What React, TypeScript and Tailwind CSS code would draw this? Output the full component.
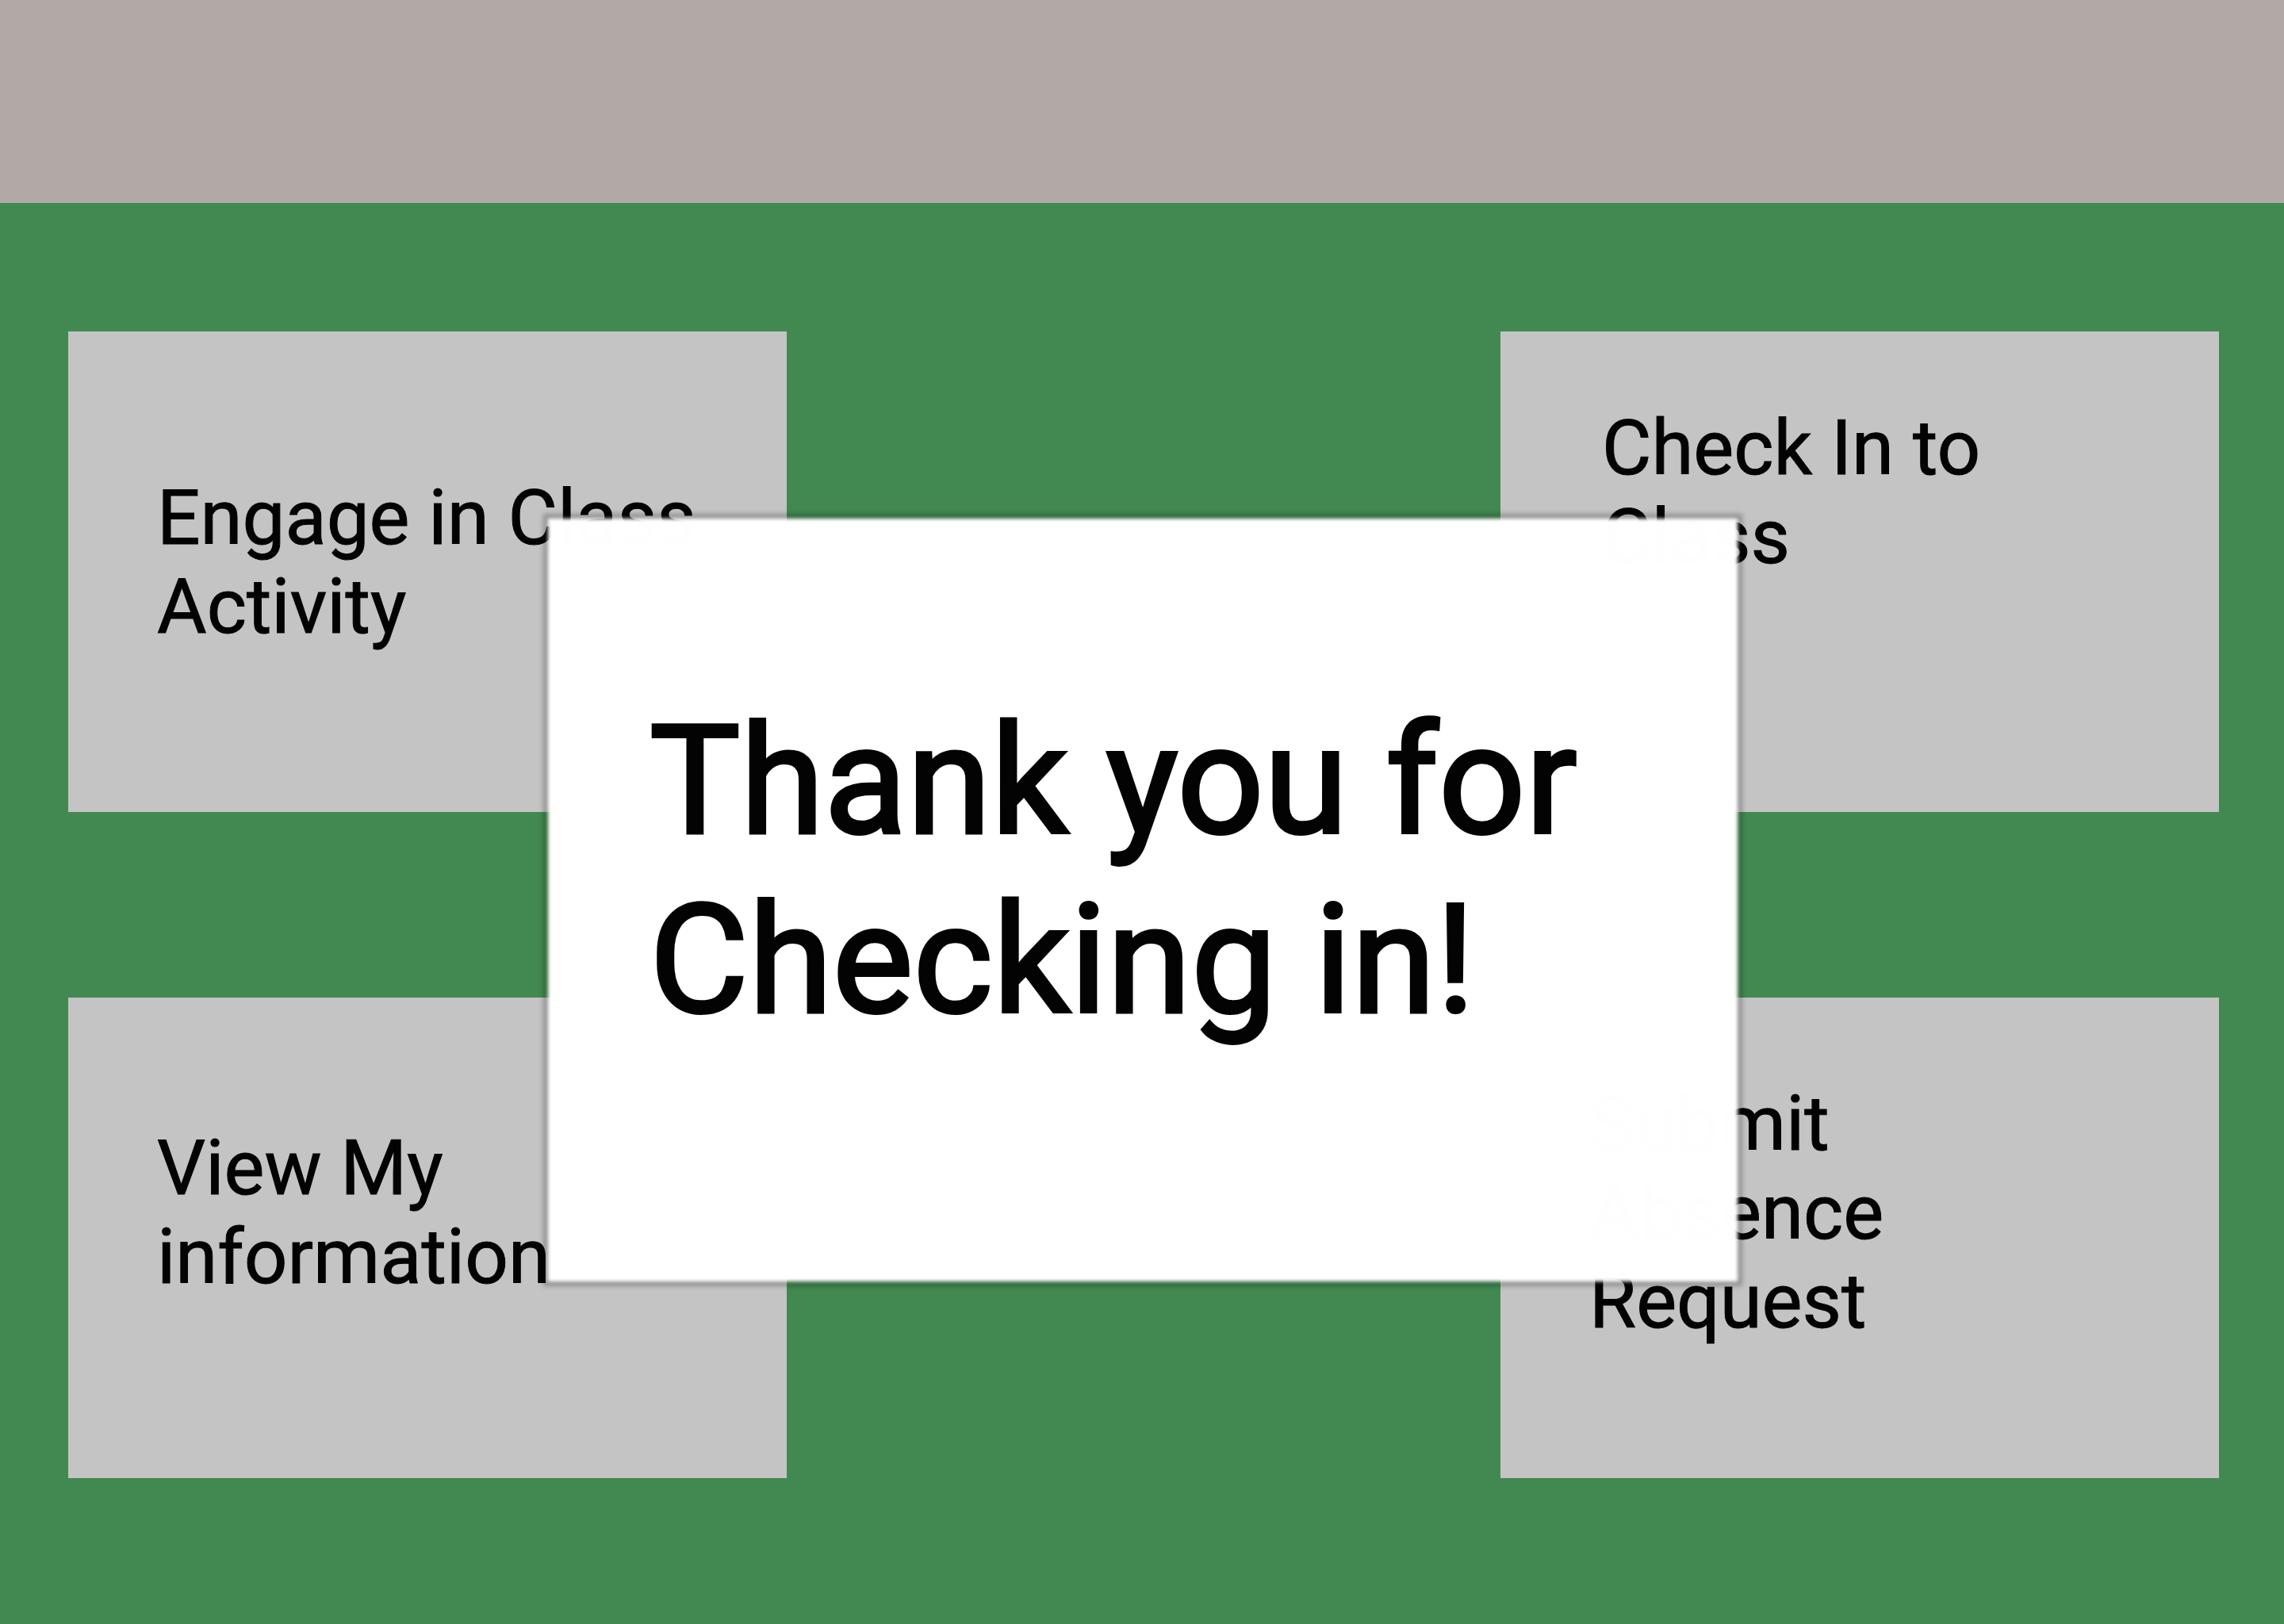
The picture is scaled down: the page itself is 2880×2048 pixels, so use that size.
const cards = [
  { label: 'Engage in Class Activity', pad: 'pt-[179px] pl-28 pr-20' },
  { label: 'Check In to Class', pad: 'pt-[91px] pl-32 pr-60' },
  { label: 'View My information', pad: 'pt-[159px] pl-28 pr-60' },
  { label: 'Submit Absence Request', pad: 'pt-[103px] pl-28 pr-80' },
];

export default function App() {
  return (
    <div className="relative flex min-h-screen flex-col bg-[#428951] font-['Roboto',sans-serif] text-[#030303]">
      <header className="h-64 bg-[#b2a9a7]" />
      <main className="grid grid-cols-[906px_906px] justify-between gap-y-[234px] pt-[162px] pr-[82px] pb-[184px] pl-[86px]">
        {cards.map((card) => (
          <button
            key={card.label}
            type="button"
            className={`flex min-h-[606px] items-start bg-[#c4c4c4] text-left text-8xl leading-[112px] [-webkit-text-stroke:1px_#030303] ${card.pad}`}
          >
            {card.label}
          </button>
        ))}
      </main>
      <div
        role="dialog"
        aria-labelledby="dialog-title"
        className="absolute top-[654px] right-[689px] left-[691px] pb-[292px]"
      >
        <div className="absolute inset-0 bg-[rgba(255,255,255,0.996)] shadow-[0_0_4px_6px_rgba(0,0,0,0.25)] blur-[2px]" />
        <h1
          id="dialog-title"
          className="relative pt-[218px] pr-40 pl-32 text-[192px] leading-[226px] font-normal [-webkit-text-stroke:4px_#030303]"
        >
          Thank you for Checking in!
        </h1>
      </div>
    </div>
  );
}
